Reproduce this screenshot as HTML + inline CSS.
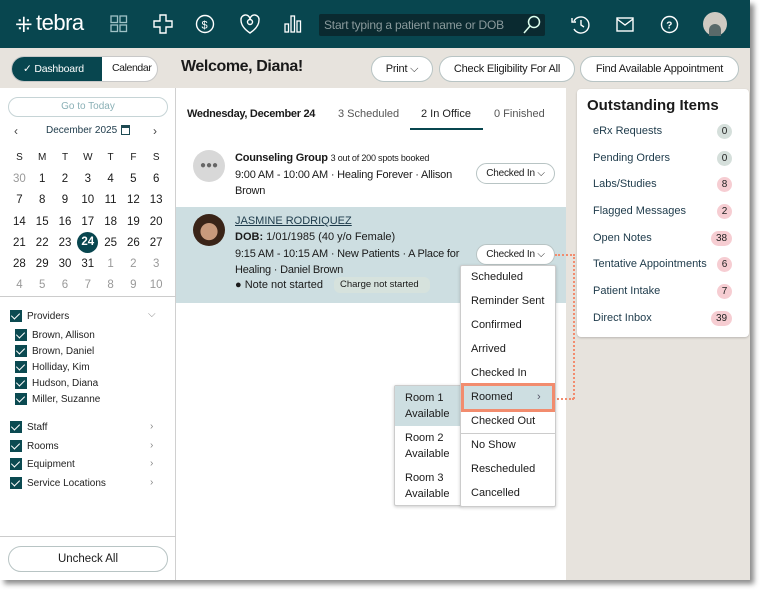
<!DOCTYPE html>
<html><head><meta charset="utf-8"><style>
*{box-sizing:border-box;margin:0;padding:0}
body{width:765px;height:595px;background:#fff;font-family:"Liberation Sans",sans-serif;position:relative;overflow:hidden;color:#1a1a1a}
.app{position:absolute;left:0;top:0;width:750px;height:580px;background:#e7e3dd;box-shadow:4px 4px 5px rgba(0,0,0,.45);overflow:hidden}
.hdr{position:absolute;left:0;top:0;width:750px;height:48px;background:#08464f}
.abs{position:absolute}
.pill{position:absolute;border:1px solid #b8c4c4;border-radius:14px;background:#fff;font-size:11px;display:flex;align-items:center;justify-content:center;color:#1a1a1a;letter-spacing:-.2px}
.side{position:absolute;left:0;top:88px;width:176px;height:492px;background:#fff;border-right:1px solid #d0d0d0}
.cal td{width:22.8px;height:21.3px;text-align:center;font-size:11.5px;padding:0}
.cal{position:absolute;left:8px;top:147px;border-collapse:collapse}
.g{color:#999}
.cb{position:absolute;width:12px;height:12px;background:#0b4a51;}
.cb:after{content:"";position:absolute;left:3px;top:1px;width:4px;height:7px;border:solid #fff;border-width:0 1.5px 1.5px 0;transform:rotate(45deg)}
.lbl{position:absolute;font-size:10px;color:#222}
.chev{position:absolute;font-size:10px;color:#888}
.mid{position:absolute;left:176px;top:88px;width:390px;height:492px;background:#fff}
.oi{position:absolute;left:577px;top:89px;width:172px;height:248px;background:#fff;border-radius:4px;box-shadow:0 1px 2px rgba(0,0,0,.2)}
.oi .r{position:absolute;left:16px;font-size:11px;color:#1d3a4a}
.badge{position:absolute;height:15px;border-radius:8px;font-size:10px;text-align:center;line-height:15px;color:#222}
.menu{position:absolute;background:#fff;border:1px solid #ccc;box-shadow:0 1px 3px rgba(0,0,0,.2);border-radius:2px}
.menu div{position:absolute;font-size:11px;color:#1a1a1a}
</style></head><body>
<div class="app">
<div class="hdr">
 <div class="abs" style="left:15px;top:13px;color:#fff;font-size:21px;">⁜</div>
 <div class="abs" style="left:36px;top:10px;color:#fff;font-size:22px;letter-spacing:-.5px">tebra</div>
 <svg class="abs" style="left:110px;top:15px" width="18" height="18" fill="none" stroke="#9fc2c6" stroke-width="1.3"><rect x="1" y="1" width="6.5" height="6.5"/><rect x="10" y="1" width="6.5" height="6.5"/><rect x="1" y="10" width="6.5" height="6.5"/><rect x="10" y="10" width="6.5" height="6.5"/></svg>
 <svg class="abs" style="left:153px;top:14px" width="20" height="20" fill="none" stroke="#fff" stroke-width="1.4"><path d="M7 1h6v6h6v6h-6v6H7v-6H1V7h6z"/></svg>
 <svg class="abs" style="left:195px;top:14px" width="20" height="20" fill="none" stroke="#fff" stroke-width="1.4"><circle cx="10" cy="10" r="8.5"/><text x="6.5" y="14.5" fill="#fff" stroke="none" font-size="11" font-family="Liberation Sans">$</text></svg>
 <svg class="abs" style="left:240px;top:13px" width="20" height="22" fill="none" stroke="#fff" stroke-width="1.4"><path d="M10 20C4 16 1 12 1 7a4.5 4.5 0 0 1 9-1 4.5 4.5 0 0 1 9 1c0 5-3 9-9 13z"/><circle cx="10" cy="9" r="2.5"/></svg>
 <svg class="abs" style="left:284px;top:14px" width="18" height="20" fill="none" stroke="#fff" stroke-width="1.3"><rect x="1" y="10" width="3.5" height="8"/><rect x="7" y="2" width="3.5" height="16"/><rect x="13" y="7" width="3.5" height="11"/></svg>
 <div class="abs" style="left:319px;top:14px;width:226px;height:22px;background:#0a2a30;border-radius:2px"></div>
 <div class="abs" style="left:324px;top:18px;color:#8a9a9c;font-size:12px;letter-spacing:-.2px">Start typing a patient name or DOB</div>
 <svg class="abs" style="left:523px;top:15px" width="18" height="19" fill="none" stroke="#dfe" stroke-width="1.5"><circle cx="11" cy="7" r="5.5"/><path d="M7 11L1 18"/></svg>
 <svg class="abs" style="left:571px;top:15px" width="20" height="20" fill="none" stroke="#fff" stroke-width="1.4"><path d="M3 6a8 8 0 1 1 0 8"/><path d="M1 3v4h4"/><path d="M10 5v5l3 2"/></svg>
 <svg class="abs" style="left:616px;top:17px" width="18" height="15" fill="none" stroke="#fff" stroke-width="1.4"><rect x="1" y="1" width="16" height="13"/><path d="M1 2l8 6 8-6"/></svg>
 <svg class="abs" style="left:660px;top:15px" width="19" height="19" fill="none" stroke="#fff" stroke-width="1.4"><circle cx="9.5" cy="9.5" r="8"/><text x="6.3" y="13.5" fill="#fff" stroke="none" font-size="10" font-weight="bold" font-family="Liberation Sans">?</text></svg>
 <div class="abs" style="left:703px;top:12px;width:24px;height:24px;border-radius:50%;background:#cfcac2"></div>
 <div class="abs" style="left:709px;top:24px;width:12px;height:12px;border-radius:6px 6px 0 0;background:#5a6a6a"></div>
</div>
<div class="abs" style="left:11px;top:56px;width:147px;height:26px;border-radius:13px;border:1px solid #c8c8c8;background:#fff;overflow:hidden">
 <div class="abs" style="left:0;top:0;width:90px;height:24px;background:#08464f;color:#fff;font-size:10.5px;line-height:24px;padding-left:11px;letter-spacing:-.2px">✓ Dashboard</div>
 <div class="abs" style="left:100px;top:5px;font-size:10.5px;letter-spacing:-.4px">Calendar</div>
</div>
<div class="abs" style="left:181px;top:58px;font-size:16px;font-weight:bold;letter-spacing:-.4px">Welcome, Diana!</div>
<div class="pill" style="left:371px;top:56px;width:62px;height:26px">Print ⌵</div>
<div class="pill" style="left:439px;top:56px;width:136px;height:26px">Check Eligibility For All</div>
<div class="pill" style="left:580px;top:56px;width:159px;height:26px">Find Available Appointment</div>

<div class="side">
 <div class="abs" style="left:8px;top:9px;width:160px;height:20px;border:1px solid #c6d4d6;border-radius:10px;text-align:center;font-size:10px;line-height:18px;color:#8ab0b6">Go to Today</div>
 <div class="abs" style="left:14px;top:36px;font-size:12px;color:#444">‹</div>
 <div class="abs" style="left:46px;top:37px;font-size:10px;color:#1d3a4a">December 2025</div>
 <div class="abs" style="left:121px;top:37px;width:9px;height:10px;border:1.5px solid #1d4a52;border-top-width:3px"></div>
 <div class="abs" style="left:153px;top:36px;font-size:12px;color:#444">›</div>
</div>
<table class="cal">
<tr><td style="font-size:10px;height:15px">S</td><td style="font-size:10px">M</td><td style="font-size:10px">T</td><td style="font-size:10px">W</td><td style="font-size:10px">T</td><td style="font-size:10px">F</td><td style="font-size:10px">S</td></tr>
<tr><td class="g">30</td><td>1</td><td>2</td><td>3</td><td>4</td><td>5</td><td>6</td></tr>
<tr><td>7</td><td>8</td><td>9</td><td>10</td><td>11</td><td>12</td><td>13</td></tr>
<tr><td>14</td><td>15</td><td>16</td><td>17</td><td>18</td><td>19</td><td>20</td></tr>
<tr><td>21</td><td>22</td><td>23</td><td><span style="display:inline-block;width:21px;height:21px;border-radius:50%;background:#08464f;color:#fff;line-height:21px;font-weight:bold">24</span></td><td>25</td><td>26</td><td>27</td></tr>
<tr><td>28</td><td>29</td><td>30</td><td>31</td><td class="g">1</td><td class="g">2</td><td class="g">3</td></tr>
<tr><td class="g">4</td><td class="g">5</td><td class="g">6</td><td class="g">7</td><td class="g">8</td><td class="g">9</td><td class="g">10</td></tr>
</table>
<div class="abs" style="left:0;top:296px;width:176px;height:1px;background:#ccc"></div>
<div class="cb" style="left:10px;top:310px"></div><div class="lbl" style="left:27px;top:311px">Providers</div><div class="chev" style="left:148px;top:309px">⌵</div>
<div class="cb" style="left:15px;top:329px"></div><div class="lbl" style="left:32px;top:330px">Brown, Allison</div>
<div class="cb" style="left:15px;top:345px"></div><div class="lbl" style="left:32px;top:346px">Brown, Daniel</div>
<div class="cb" style="left:15px;top:361px"></div><div class="lbl" style="left:32px;top:362px">Holliday, Kim</div>
<div class="cb" style="left:15px;top:377px"></div><div class="lbl" style="left:32px;top:378px">Hudson, Diana</div>
<div class="cb" style="left:15px;top:393px"></div><div class="lbl" style="left:32px;top:394px">Miller, Suzanne</div>
<div class="cb" style="left:10px;top:421px"></div><div class="lbl" style="left:27px;top:422px">Staff</div><div class="chev" style="left:150px;top:421px">›</div>
<div class="cb" style="left:10px;top:440px"></div><div class="lbl" style="left:27px;top:441px">Rooms</div><div class="chev" style="left:150px;top:440px">›</div>
<div class="cb" style="left:10px;top:458px"></div><div class="lbl" style="left:27px;top:459px">Equipment</div><div class="chev" style="left:150px;top:458px">›</div>
<div class="cb" style="left:10px;top:477px"></div><div class="lbl" style="left:27px;top:478px">Service Locations</div><div class="chev" style="left:150px;top:477px">›</div>
<div class="abs" style="left:0;top:536px;width:176px;height:1px;background:#ccc"></div>
<div class="abs" style="left:8px;top:546px;width:160px;height:26px;border:1px solid #b8c4c4;border-radius:13px;text-align:center;font-size:11.5px;line-height:24px">Uncheck All</div>

<div class="mid">
 <div class="abs" style="left:11px;top:20px;font-size:11px;font-weight:bold;letter-spacing:-.3px">Wednesday, December 24</div>
 <div class="abs" style="left:162px;top:20px;font-size:11px;color:#555">3 Scheduled</div>
 <div class="abs" style="left:245px;top:20px;font-size:11px;color:#222">2 In Office</div>
 <div class="abs" style="left:234px;top:40px;width:73px;height:1.5px;background:#08464f"></div>
 <div class="abs" style="left:318px;top:20px;font-size:11px;color:#555">0 Finished</div>
 <div class="abs" style="left:17px;top:62px;width:32px;height:32px;border-radius:50%;background:#d8d8d8;text-align:center;line-height:32px;font-size:10px;color:#666">●●●</div>
 <div class="abs" style="left:59px;top:64px;font-size:11px;font-weight:bold;letter-spacing:-.2px">Counseling Group <span style="font-size:9px;font-weight:normal">3 out of 200 spots booked</span></div>
 <div class="abs" style="left:59px;top:79px;font-size:11px;line-height:16px;width:240px;letter-spacing:-.2px">9:00 AM - 10:00 AM · Healing Forever · Allison Brown</div>
 <div class="pill" style="left:300px;top:75px;width:79px;height:21px;font-size:10px">Checked In ⌵</div>
 <div class="abs" style="left:0;top:119px;width:390px;height:96px;background:#cddee1"></div>
 <div class="abs" style="left:17px;top:126px;width:32px;height:32px;border-radius:50%;background:radial-gradient(circle at 50% 55%,#c99a7c 35%,#3a2418 37%)"></div>
 <div class="abs" style="left:59px;top:127px;font-size:11px;color:#1d3a4a;text-decoration:underline">JASMINE RODRIQUEZ</div>
 <div class="abs" style="left:59px;top:143px;font-size:11px"><b>DOB:</b> 1/01/1985 (40 y/o Female)</div>
 <div class="abs" style="left:59px;top:158px;font-size:11px;line-height:16px;width:232px;letter-spacing:-.2px">9:15 AM - 10:15 AM · New Patients · A Place for Healing · Daniel Brown</div>
 <div class="abs" style="left:59px;top:191px;font-size:11px">● Note not started</div>
 <div class="abs" style="left:158px;top:189px;width:96px;height:16px;background:#d6e2dd;border-radius:6px;font-size:9.5px;line-height:16px;padding-left:6px">Charge not started</div>
 <div class="pill" style="left:300px;top:156px;width:79px;height:21px;font-size:10px">Checked In ⌵</div>
</div>

<div class="oi">
 <div class="abs" style="left:10px;top:8px;font-size:15px;font-weight:bold">Outstanding Items</div>
 <div class="r" style="top:36px">eRx Requests</div><div class="badge" style="left:140px;top:35px;width:15px;background:#d5dfdb">0</div>
 <div class="r" style="top:63px">Pending Orders</div><div class="badge" style="left:140px;top:62px;width:15px;background:#d5dfdb">0</div>
 <div class="r" style="top:89px">Labs/Studies</div><div class="badge" style="left:140px;top:88px;width:15px;background:#f6cdd2">8</div>
 <div class="r" style="top:116px">Flagged Messages</div><div class="badge" style="left:140px;top:115px;width:15px;background:#f6cdd2">2</div>
 <div class="r" style="top:143px">Open Notes</div><div class="badge" style="left:134px;top:142px;width:21px;background:#f6cdd2">38</div>
 <div class="r" style="top:169px">Tentative Appointments</div><div class="badge" style="left:140px;top:168px;width:15px;background:#f6cdd2">6</div>
 <div class="r" style="top:196px">Patient Intake</div><div class="badge" style="left:140px;top:195px;width:15px;background:#f6cdd2">7</div>
 <div class="r" style="top:223px">Direct Inbox</div><div class="badge" style="left:134px;top:222px;width:21px;background:#f6cdd2">39</div>
</div>

<div class="abs" style="left:555px;top:254px;width:20px;height:0;border-top:2.5px dotted #f28c6e"></div>
<div class="abs" style="left:573px;top:254px;width:0;height:145px;border-left:2.5px dotted #f28c6e"></div>
<div class="abs" style="left:554px;top:398px;width:20px;height:0;border-top:2.5px dotted #f28c6e"></div>

<div class="menu" style="left:394px;top:385px;width:68px;height:121px">
 <div style="left:0;top:0;width:66px;height:40px;background:#cddee1;position:absolute"></div>
 <div style="left:10px;top:4px;line-height:16px">Room 1<br>Available</div>
 <div style="left:10px;top:44px;line-height:16px">Room 2<br>Available</div>
 <div style="left:10px;top:84px;line-height:16px">Room 3<br>Available</div>
</div>
<div class="menu" style="left:460px;top:265px;width:96px;height:242px">
 <div style="left:10px;top:5px">Scheduled</div>
 <div style="left:10px;top:29px">Reminder Sent</div>
 <div style="left:10px;top:53px">Confirmed</div>
 <div style="left:10px;top:77px">Arrived</div>
 <div style="left:10px;top:101px">Checked In</div>
 <div style="left:0;top:117px;width:94px;height:29px;background:#cddee1;border:3px solid #f28c6e"></div>
 <div style="left:10px;top:125px">Roomed</div><div style="left:76px;top:125px;color:#556">›</div>
 <div style="left:10px;top:149px">Checked Out</div>
 <div style="left:0;top:167px;width:94px;height:1px;background:#ccc"></div>
 <div style="left:10px;top:173px">No Show</div>
 <div style="left:10px;top:197px">Rescheduled</div>
 <div style="left:10px;top:221px">Cancelled</div>
</div>
</div>
</body></html>
